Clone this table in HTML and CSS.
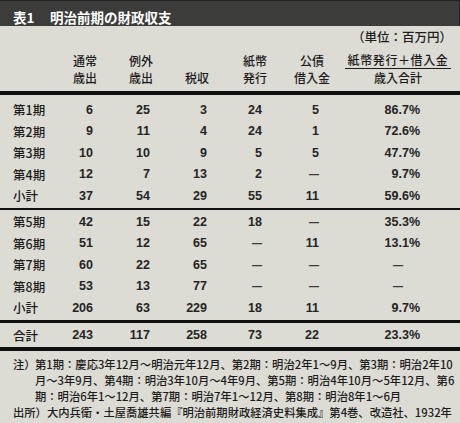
FILE: index.html
```html
<!DOCTYPE html>
<html lang="ja">
<head>
<meta charset="utf-8">
<link rel="stylesheet" href="styles.css">
</head>
<body>
<div class="sheet">
  <div class="titlebar"><span class="tno">表1</span><span class="ttext">明治前期の財政収支</span></div>
  <div class="unit">（単位：百万円）</div>
  <div class="row head">
    <div></div>
    <div class="h"><div>通常</div><div>歳出</div></div>
    <div class="h"><div>例外</div><div>歳出</div></div>
    <div class="h"><div>&nbsp;</div><div>税収</div></div>
    <div class="h"><div>紙幣</div><div>発行</div></div>
    <div class="h"><div>公債</div><div>借入金</div></div>
    <div class="h"><div><span class="ul">紙幣発行＋借入金</span></div><div>歳入合計</div></div>
  </div>
  <div class="block b1">
    <div class="row"><div class="lab">第1期</div><div class="c1">6</div><div class="c2">25</div><div class="c3">3</div><div class="c4">24</div><div class="c5">5</div><div class="c6">86.7%</div></div>
    <div class="row"><div class="lab">第2期</div><div class="c1">9</div><div class="c2">11</div><div class="c3">4</div><div class="c4">24</div><div class="c5">1</div><div class="c6">72.6%</div></div>
    <div class="row"><div class="lab">第3期</div><div class="c1">10</div><div class="c2">10</div><div class="c3">9</div><div class="c4">5</div><div class="c5">5</div><div class="c6">47.7%</div></div>
    <div class="row"><div class="lab">第4期</div><div class="c1">12</div><div class="c2">7</div><div class="c3">13</div><div class="c4">2</div><div class="c5"><span class="dash">—</span></div><div class="c6">9.7%</div></div>
    <div class="row"><div class="lab">小計</div><div class="c1">37</div><div class="c2">54</div><div class="c3">29</div><div class="c4">55</div><div class="c5">11</div><div class="c6">59.6%</div></div>
  </div>
  <div class="block b2">
    <div class="row"><div class="lab">第5期</div><div class="c1">42</div><div class="c2">15</div><div class="c3">22</div><div class="c4">18</div><div class="c5"><span class="dash">—</span></div><div class="c6">35.3%</div></div>
    <div class="row"><div class="lab">第6期</div><div class="c1">51</div><div class="c2">12</div><div class="c3">65</div><div class="c4"><span class="dash">—</span></div><div class="c5">11</div><div class="c6">13.1%</div></div>
    <div class="row"><div class="lab">第7期</div><div class="c1">60</div><div class="c2">22</div><div class="c3">65</div><div class="c4"><span class="dash">—</span></div><div class="c5"><span class="dash">—</span></div><div class="c6 mid"><span class="dash">—</span></div></div>
    <div class="row"><div class="lab">第8期</div><div class="c1">53</div><div class="c2">13</div><div class="c3">77</div><div class="c4"><span class="dash">—</span></div><div class="c5"><span class="dash">—</span></div><div class="c6 mid"><span class="dash">—</span></div></div>
    <div class="row"><div class="lab">小計</div><div class="c1">206</div><div class="c2">63</div><div class="c3">229</div><div class="c4">18</div><div class="c5">11</div><div class="c6">9.7%</div></div>
  </div>
  <div class="block b3">
    <div class="row total"><div class="lab">合計</div><div class="c1">243</div><div class="c2">117</div><div class="c3">258</div><div class="c4">73</div><div class="c5">22</div><div class="c6">23.3%</div></div>
  </div>
  <div class="notes">
    <div class="note"><span class="nk">注）</span><span class="nv">第1期：慶応3年12月～明治元年12月、第2期：明治2年1～9月、第3期：明治2年10<br>月～3年9月、第4期：明治3年10月～4年9月、第5期：明治4年10月～5年12月、第6<br>期：明治6年1～12月、第7期：明治7年1～12月、第8期：明治8年1～6月</span></div>
    <div class="note"><span class="nk2">出所）</span><span class="nv">大内兵衛・土屋喬雄共編『明治前期財政経済史料集成』第4巻、改造社、1932年</span></div>
  </div>
</div>
</body>
</html>
```
FILE: styles.css
```css
html, body {
  margin: 0;
  padding: 0;
  background: #dcdbd4;
}
.sheet {
  width: 460px;
  height: 423px;
  overflow: hidden;
  background: #dcdbd4;
  color: #1c1c1c;
  font-family: "Liberation Sans", "Noto Sans CJK JP", sans-serif;
}
.titlebar {
  height: 26px;
  box-sizing: border-box;
  background: #3c3c3b;
  border-top: 1px solid #222;
  border-right: 1px solid #222;
  color: #fff;
  font-family: "Noto Sans CJK JP", sans-serif;
  font-weight: 700;
  font-size: 13.5px;
  line-height: 18px;
  padding: 7px 0 0 13px;
  display: flex;
}
.tno { width: 37px; }
.unit {
  height: 21px;
  line-height: 21px;
  text-align: right;
  padding-right: 8px;
  font-size: 12.5px;
  font-family: "Noto Sans CJK JP", sans-serif;
  font-weight: 500;
}
.row {
  display: grid;
  grid-template-columns: 47px 50px 62px 50px 66px 48px 124px;
  padding-left: 13px;
  height: 21.5px;
  align-items: center;
  font-size: 12.5px;
  font-weight: 700;
  color: #242424;
}
.row.head {
  height: 44px;
  border-bottom: 4px solid #111;
  font-family: "Noto Sans CJK JP", sans-serif;
  font-weight: 500;
  font-size: 12px;
  line-height: 17.5px;
  color: #1c1c1c;
}
.h { text-align: center; }
.ul {
  display: inline-block;
  border-bottom: 1.5px solid #1c1c1c;
  padding: 0 3px;
  line-height: 16px;
  letter-spacing: 0.6px;
}
.lab {
  font-family: "Noto Sans CJK JP", sans-serif;
  font-weight: 500;
  color: #1c1c1c;
}
.c1, .c2, .c3, .c4, .c5, .c6 { text-align: right; }
.c1 { padding-right: 17px; }
.c2 { padding-right: 22px; }
.c3 { padding-right: 15px; }
.c4 { padding-right: 26px; }
.c5 { padding-right: 17px; }
.c6 { padding-right: 40px; }
.c6.mid { text-align: center; padding-right: 0; }
.dash {
  font-size: 10px;
  font-weight: 700;
  color: #3a3a3a;
}
.b1 {
  padding-top: 4px;
  padding-bottom: 1.5px;
  border-bottom: 2.5px solid #111;
}
.b2 {
  padding-top: 1px;
  padding-bottom: 1.5px;
  border-bottom: 3px solid #111;
}
.b3 {
  border-bottom: 4px solid #111;
}
.row.total { height: 24px; }
.notes {
  padding: 5px 0 0 13px;
  font-family: "Noto Sans CJK JP", sans-serif;
  font-weight: 500;
  font-size: 11.3px;
  line-height: 16px;
  white-space: nowrap;
}
.note { display: flex; }
.nk { width: 22px; flex: none; }
.nk2 { flex: none; }
```
